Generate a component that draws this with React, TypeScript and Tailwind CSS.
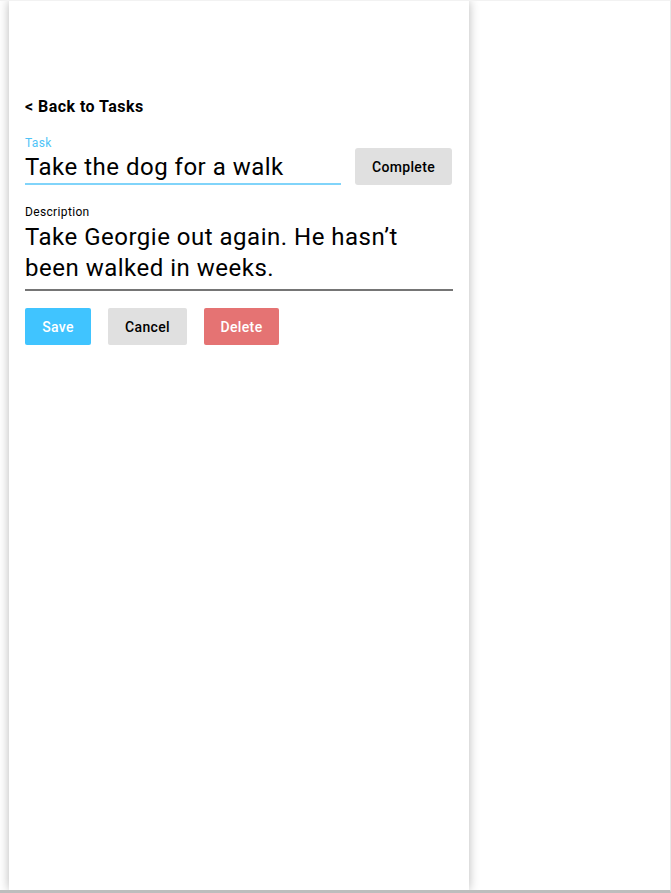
export default function App() {
  return (
    <div className="flex h-[893px] w-[671px] overflow-hidden border-t border-b-[3px] border-r border-t-[#f2f2f2] border-b-[#bdbdbd] border-r-[#e8e8e8] bg-white font-['Roboto',sans-serif]">
      <div className="ml-[9px] h-full w-[460px] bg-white px-4 pt-[94px] shadow-[0_0_10px_rgba(0,0,0,0.28)]">
        <button type="button" className="text-base font-bold leading-5 tracking-[0.45px] text-black">&lt; Back to Tasks</button>

        <div className="mt-[17px] flex items-end gap-[14px]">
          <label className="block w-[316px]">
            <span className="block text-xs leading-[14px] tracking-[0.35px] text-[#4fc3f7]">Task</span>
            <div className="border-b-2 border-[#81d4fa] pt-px text-2xl leading-[32px] tracking-[0.5px] text-black">Take the dog for a walk</div>
          </label>
          <button type="button" className="h-[37px] w-[97px] rounded-[3px] bg-[#e0e0e0] text-sm font-medium tracking-[0.35px] text-black">Complete</button>
        </div>

        <label className="mt-[20px] block">
          <span className="block text-xs leading-[14px] tracking-[0.35px] text-black">Description</span>
          <div className="mt-[3px] border-b-2 border-[#757575] pb-[5px] text-2xl leading-[31px] tracking-[0.5px] text-black">
            Take Georgie out again. He hasn’t been walked in weeks.
          </div>
        </label>

        <div className="mt-[17px] flex gap-[17px]">
          <button type="button" className="h-[37px] w-[66px] rounded-[2px] bg-[#40c4ff] text-sm font-medium tracking-[0.35px] text-white">Save</button>
          <button type="button" className="h-[37px] w-[79px] rounded-[2px] bg-[#e0e0e0] text-sm font-medium tracking-[0.35px] text-black">Cancel</button>
          <button type="button" className="h-[37px] w-[75px] rounded-[2px] bg-[#e57373] text-sm font-medium tracking-[0.35px] text-white">Delete</button>
        </div>
      </div>
    </div>
  );
}
